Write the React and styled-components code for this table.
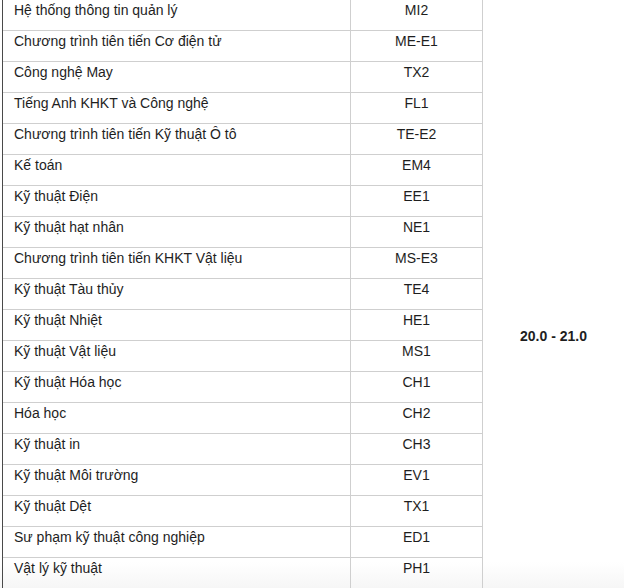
import React from "react";
import styled, { createGlobalStyle } from "styled-components";

const Global = createGlobalStyle`
  html, body { margin: 0; padding: 0; background: #fff; }
  body { font-family: "Liberation Sans", Arial, sans-serif; overflow: hidden; }
`;

const Viewport = styled.div`
  width: 624px;
  height: 588px;
  overflow: hidden;
  padding-left: 2px;
  box-sizing: border-box;
  background: linear-gradient(
    to bottom,
    #ffffff 0px,
    #ffffff 562px,
    #f6f6f6 588px
  );
`;

const Table = styled.table`
  border-collapse: separate;
  border-spacing: 0;
  table-layout: fixed;
  width: 622px;
  border-left: 1px solid #4a4a4a;
  font-size: 14px;
  line-height: 17px;
  color: #1e1e1e;
`;

const Col = styled.col`
  width: ${(p) => p.$w}px;
`;

const Cell = styled.td`
  box-sizing: border-box;
  height: 31px;
  padding: 2px 11px 11px;
  border-bottom: 1px solid #cfcfcf;
  border-right: 1px solid #cfcfcf;
  text-align: ${(p) => (p.$center ? "center" : "left")};
  vertical-align: top;
  white-space: nowrap;
`;

const RangeCell = styled.td`
  text-align: center;
  vertical-align: middle;
  padding-top: 84px;
  font-weight: bold;
  color: #1e1e1e;
`;

const rows = [
  ["Hệ thống thông tin quản lý", "MI2"],
  ["Chương trình tiên tiến Cơ điện tử", "ME-E1"],
  ["Công nghệ May", "TX2"],
  ["Tiếng Anh KHKT và Công nghệ", "FL1"],
  ["Chương trình tiên tiến Kỹ thuật Ô tô", "TE-E2"],
  ["Kế toán", "EM4"],
  ["Kỹ thuật Điện", "EE1"],
  ["Kỹ thuật hạt nhân", "NE1"],
  ["Chương trình tiên tiến KHKT Vật liệu", "MS-E3"],
  ["Kỹ thuật Tàu thủy", "TE4"],
  ["Kỹ thuật Nhiệt", "HE1"],
  ["Kỹ thuật Vật liệu", "MS1"],
  ["Kỹ thuật Hóa học", "CH1"],
  ["Hóa học", "CH2"],
  ["Kỹ thuật in", "CH3"],
  ["Kỹ thuật Môi trường", "EV1"],
  ["Kỹ thuật Dệt", "TX1"],
  ["Sư phạm kỹ thuật công nghiệp", "ED1"],
  ["Vật lý kỹ thuật", "PH1"],
];

export default function App() {
  return (
    <>
      <Global />
      <Viewport>
        <Table>
          <colgroup>
            <Col $w={348} />
            <Col $w={132} />
            <Col $w={141} />
          </colgroup>
          <tbody>
            {rows.map(([name, code], i) => (
              <tr key={code}>
                <Cell>{name}</Cell>
                <Cell $center>{code}</Cell>
                {i === 0 && <RangeCell rowSpan={rows.length}>20.0 - 21.0</RangeCell>}
              </tr>
            ))}
          </tbody>
        </Table>
      </Viewport>
    </>
  );
}
